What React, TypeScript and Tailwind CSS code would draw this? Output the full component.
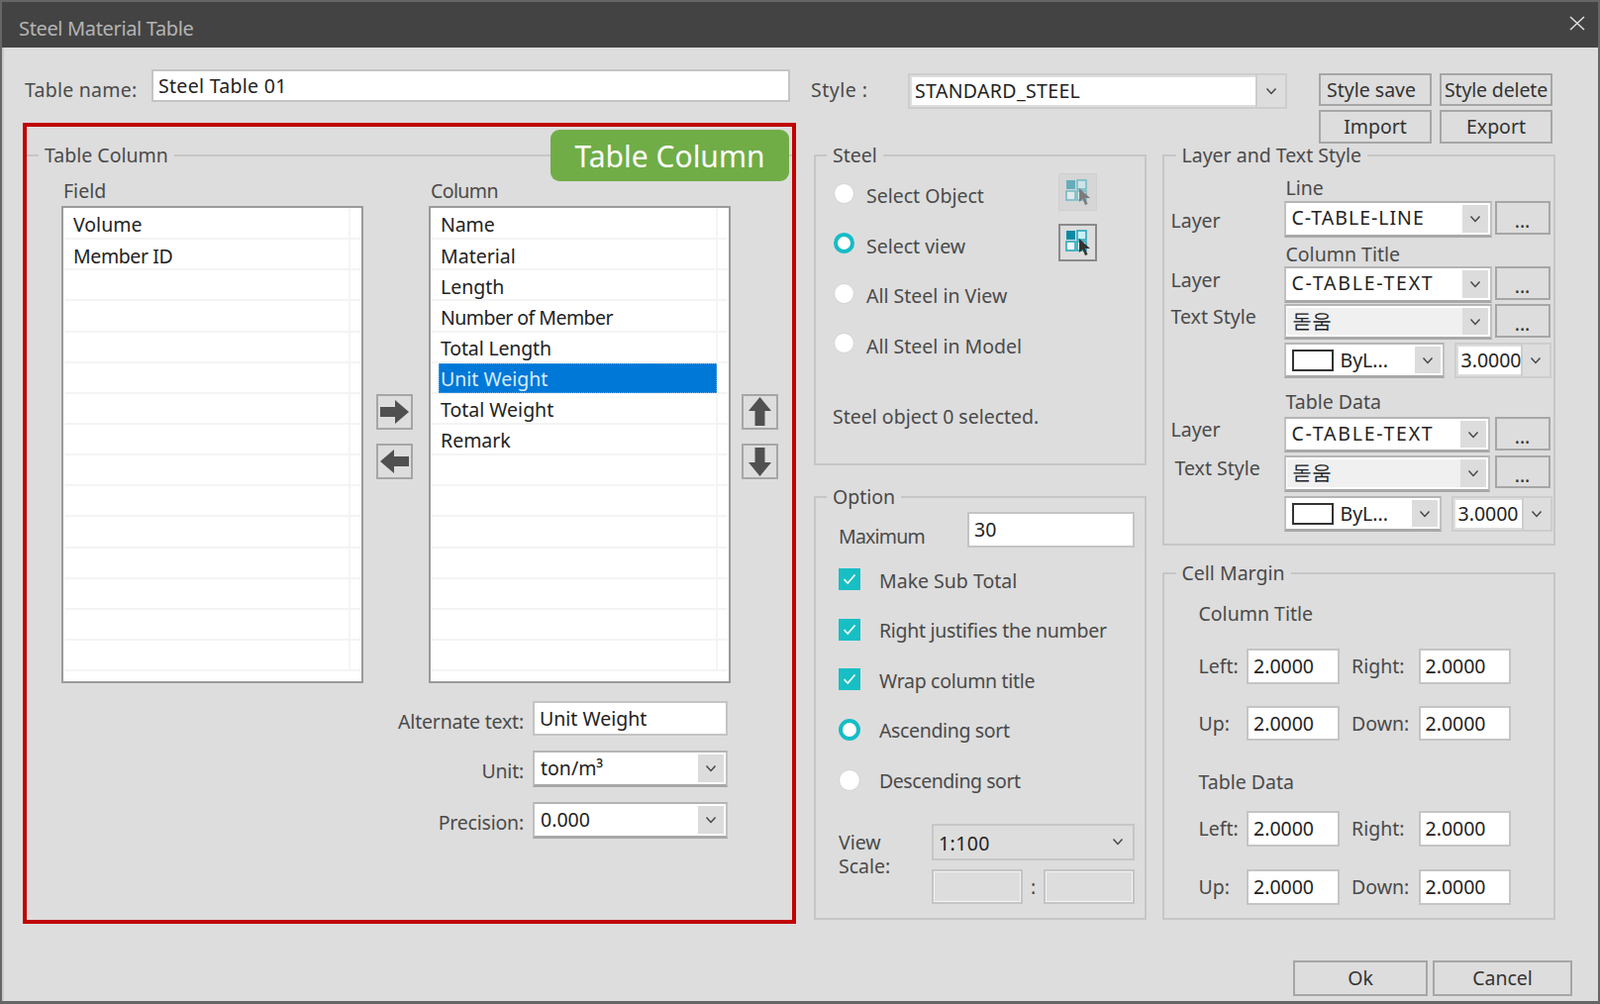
import type { ReactNode } from "react";

const fieldRows = ["Volume", "Member ID"];
const columnRows = ["Name", "Material", "Length", "Number of Member", "Total Length", "Unit Weight", "Total Weight", "Remark"];

const rowTracking: Record<string, string> = {
  "Number of Member": "tracking-[-0.55px]",
  "Member ID": "tracking-[-0.4px]",
  "Total Length": "tracking-[-0.15px]",
  Name: "tracking-[-0.1px]",
};

function Chevron({ className = "" }: { className?: string }) {
  return (
    <svg width="12" height="8" viewBox="0 0 12 8" className={className}>
      <path d="M1.5 1.5 L6 6.5 L10.5 1.5" fill="none" stroke="#444" strokeWidth="1.4" />
    </svg>
  );
}

function Group({ title, className = "", legendClass = "ml-[12px]", children }: { title: string; className?: string; legendClass?: string; children: ReactNode }) {
  return (
    <fieldset className={`border-2 border-[#c6c6c6] ${className}`}>
      <legend className={`${legendClass} px-[6px] h-[26px] leading-[26px] text-[#4a4a4a]`}>{title}</legend>
      {children}
    </fieldset>
  );
}

function TextBox({ value, className = "", muted = false }: { value?: string; className?: string; muted?: boolean }) {
  return (
    <div
      className={`border-2 border-[#c4c4c4] px-[5px] flex items-center leading-none ${muted ? "bg-[#dddddd] outline outline-1 -outline-offset-3 outline-[#f4f4f4]" : "bg-white"} text-[#222] ${className}`}
    >
      {value}
    </div>
  );
}

// raised combo with a grey arrow cell on the right
function Combo({ children, className = "", inner = "bg-white" }: { children: ReactNode; className?: string; inner?: string }) {
  return (
    <div className={`flex border-2 border-[#c0c0c0] border-b-[3px] border-b-[#a8a8a8] border-t-[#b4b4b4] bg-white text-[#222] ${className}`}>
      <div className={`flex-1 min-w-0 flex items-center pl-[5px] my-[2px] ml-[1px] leading-none ${inner}`}>{children}</div>
      <div className="w-[26px] my-[2px] mr-[2px] bg-[#dcdcdc] flex items-center justify-center">
        <Chevron />
      </div>
    </div>
  );
}

// flat combo: grey frame, white edit part, bare arrow
function FlatCombo({ value, className = "", textClass = "", arrow = 30 }: { value: string; className?: string; textClass?: string; arrow?: number }) {
  return (
    <div className={`flex border-2 border-[#cdcdcd] bg-[#dddddd] text-[#222] ${className}`}>
      <div className={`flex-1 min-w-0 bg-white my-[2px] ml-[2px] flex items-center pl-[3px] leading-none ${textClass}`}>{value}</div>
      <div className="border-l-2 border-[#cdcdcd] flex items-center justify-center" style={{ width: arrow }}>
        <Chevron />
      </div>
    </div>
  );
}

function Btn({ children, className = "" }: { children: ReactNode; className?: string }) {
  return (
    <div className={`border-2 border-[#a6a6a6] flex items-center justify-center leading-none text-[#333] ${className}`}>
      {children}
    </div>
  );
}

function Arrow({ d }: { d: string }) {
  return (
    <div className="w-[37px] h-[36px] border-2 border-[#a6a6a6] flex items-center justify-center">
      <svg width="33" height="32" viewBox="0 0 33 32">
        <path d={d} fill="#505050" />
      </svg>
    </div>
  );
}

function ListBox({ rows, selected, textLeft }: { rows: string[]; selected?: string; textLeft: string }) {
  const total = Array.from({ length: 15 }, (_, i) => rows[i] ?? "");
  return (
    <div className="h-[482px] border-2 border-[#9a9a9a] bg-white overflow-hidden px-[1px] pt-[1px]">
      {total.map((row, i) => (
        <div key={i} className="h-[31.15px] flex border-b-2 border-[#f4f4f4]">
          <div className="w-[289px] border-r-2 border-[#f4f4f4] flex items-center">
            {row === selected && row ? (
              <div className="ml-[7px] mt-[2px] w-[281px] shrink-0 h-[30px] bg-[#0078d7] text-[#d8ecff] flex items-center pl-[2px] pt-[1px] outline-1 outline-dotted -outline-offset-1 outline-[#5aa6e6]">
                {row}
              </div>
            ) : (
              <span className={`${textLeft} mt-[3px] text-[#222] ${rowTracking[row] ?? ""}`}>{row}</span>
            )}
          </div>
        </div>
      ))}
    </div>
  );
}

function GridIcon({ faded = false }: { faded?: boolean }) {
  return (
    <svg width="30" height="30" viewBox="0 0 30 30" className={faded ? "opacity-55" : ""}>
      <rect x="3" y="3" width="9" height="9" fill="#0d8aa3" />
      <rect x="14" y="3" width="9" height="9" fill="#c9f1f5" stroke="#2aa7bb" strokeWidth="1.6" />
      <rect x="3" y="14" width="9" height="9" fill="#eef8f9" stroke="#2aa7bb" strokeWidth="1.6" />
      <rect x="14" y="14" width="9" height="9" fill="#eef8f9" stroke="#2aa7bb" strokeWidth="1.6" />
      <path d="M16 11 L16 25 L19.5 22 L22 28 L24.5 27 L22 21 L27 21 Z" fill="#333" />
    </svg>
  );
}

function Radio({ on = false, size = "w-[21px] h-[21px]" }: { on?: boolean; size?: string }) {
  return (
    <div
      className={`${size} shrink-0 rounded-full bg-white ${on ? "border-[4px] border-[#16bcc6]" : "border border-[#d2d2d2]"}`}
    />
  );
}

function CheckBox() {
  return (
    <div className="w-[22px] h-[22px] shrink-0 bg-[#17bfc4] flex items-center justify-center">
      <svg width="14" height="12" viewBox="0 0 14 12">
        <path d="M1.5 6 L5.2 10 L12.5 1.5" fill="none" stroke="#fff" strokeWidth="1.7" />
      </svg>
    </div>
  );
}

function SteelRow({ on, label, icon }: { on?: boolean; label: string; icon?: ReactNode }) {
  return (
    <div className="h-[50.5px] pl-[18px] flex items-center">
      <Radio on={on} />
      <span className="ml-[12px] mt-[5px]">{label}</span>
      {icon && <div className="ml-auto mr-[48px] -mt-[2px]">{icon}</div>}
    </div>
  );
}

function OptionRow({ mark, label, tracking = "" }: { mark: ReactNode; label: string; tracking?: string }) {
  return (
    <div className="h-[50.6px] pl-[23px] flex items-center">
      {mark}
      <span className={`ml-[19px] mt-[2px] ${tracking}`}>{label}</span>
    </div>
  );
}

function LayerRow({ label, labelClass = "pl-[7px]", top, className = "", combo, dotsH, comboW, gap }: {
  label: string; labelClass?: string; top: string; className?: string; combo: ReactNode; dotsH: string; comboW?: string; gap: string;
}) {
  return (
    <div className={`flex ${className}`}>
      <div className={`w-[121px] shrink-0 ${labelClass} ${top} leading-[26px]`}>{label}</div>
      <div className={comboW}>{combo}</div>
      <Btn className={`w-[56px] ${dotsH} ${gap}`}><span className="mt-[6px]">...</span></Btn>
    </div>
  );
}

function ByLayer({ className = "" }: { className?: string }) {
  return (
    <Combo className={className}>
      <span className="w-[42px] h-[22px] border-2 border-[#333] bg-white shrink-0" />
      <span className="ml-[7px]">ByL...</span>
    </Combo>
  );
}

function LayerName({ children, tracking }: { children: string; tracking: string }) {
  return <span className={`-mt-[2px] ${tracking}`}>{children}</span>;
}

function MarginRow({ a, b, className = "" }: { a: string; b: string; className?: string }) {
  return (
    <div className={`flex items-center pl-[35px] h-[35.5px] ${className}`}>
      <span className="w-[48.5px]">{a}</span>
      <TextBox value="2.0000" className="w-[93.5px] h-full" />
      <span className="w-[67.5px] ml-[12.5px]">{b}</span>
      <TextBox value="2.0000" className="w-[93.5px] h-full" />
    </div>
  );
}

export default function App() {
  return (
    <div className="w-[1616px] h-[1014px] overflow-hidden border-x-2 border-t-2 border-b-[3px] border-[#666666] bg-[#dddddd] text-[19.5px] text-[#4a4a4a] font-['Noto_Sans','Noto_Sans_CJK_KR',sans-serif] flex flex-col">
      <div className="h-[46px] shrink-0 bg-[#434343] flex items-center justify-between pl-[17px] pr-[13px] text-[#b4b4b4]">
        <span className="mt-[8px] text-[20px] tracking-[-0.35px]">Steel Material Table</span>
        <svg width="16" height="15" viewBox="0 0 16 15" className="-mt-[4px]">
          <path d="M1 1 L15 14 M15 1 L1 14" stroke="#e0e0e0" strokeWidth="1.5" />
        </svg>
      </div>

      <div className="flex-1 flex pl-[19px] border-l-2 border-[#c9c9c9]">
        {/* left side */}
        <div className="w-[781px] shrink-0">
          <div className="flex mt-[22px] h-[33px]">
            <div className="w-[130px] pl-[2px] pt-[7px] leading-[28px] tracking-[0.25px]">Table name:</div>
            <div className="w-[645px] border-2 border-[#c4c4c4] bg-white text-[#222] flex items-center pl-[5px] leading-none tracking-[0.3px]">Steel Table 01</div>
          </div>

          <div className="relative mt-[21px] h-[809px] border-4 border-[#c00000] pt-[16px]">
            <div className="absolute left-[529px] top-[3px] w-[241px] h-[52px] rounded-[9px] bg-[#70ad47] text-white text-[30px] flex items-center justify-center">
              Table Column
            </div>
            <Group title="Table Column" className="border-x-0 border-b-0">
              <div className="flex mt-[10px] pl-[35px]">
                <div className="w-[305px]">
                  <div className="h-[28px] leading-[26px] pl-[2px]">Field</div>
                  <ListBox rows={fieldRows} textLeft="ml-[9px]" />
                </div>
                <div className="w-[66px] pl-[13px] pt-[218px] flex flex-col gap-[14px]">
                  <Arrow d="M2 11 H17 V4 L31 16 L17 28 V21 H2 Z" />
                  <Arrow d="M31 11 H16 V4 L2 16 L16 28 V21 H31 Z" />
                </div>
                <div className="w-[305px]">
                  <div className="h-[28px] leading-[26px] pl-[2px] tracking-[-0.6px]">Column</div>
                  <ListBox rows={columnRows} selected="Unit Weight" textLeft="ml-[9px]" />
                </div>
                <div className="w-[48px] pl-[11px] pt-[218px] flex flex-col gap-[14px]">
                  <Arrow d="M11.5 30 V15 H5 L16.5 1 L28 15 H21.5 V30 Z" />
                  <Arrow d="M11.5 2 V17 H5 L16.5 31 L28 17 H21.5 V2 Z" />
                </div>
              </div>
              <div className="mt-[18px]">
                <div className="flex h-[35px]">
                  <div className="w-[502px] text-right pt-[7px] leading-[28px] tracking-[-0.2px]">Alternate text:</div>
                  <TextBox value="Unit Weight" className="ml-[9px] w-[197px] h-full" />
                </div>
                <div className="flex h-[37px] mt-[15px]">
                  <div className="w-[502px] text-right pt-[7px] leading-[28px] tracking-[-0.2px]">Unit:</div>
                  <Combo className="ml-[9px] w-[197px] h-full">ton/m³</Combo>
                </div>
                <div className="flex h-[37px] mt-[15px]">
                  <div className="w-[502px] text-right pt-[7px] leading-[28px] tracking-[-0.2px]">Precision:</div>
                  <Combo className="ml-[9px] w-[197px] h-full">0.000</Combo>
                </div>
              </div>
            </Group>
          </div>
        </div>

        {/* right side */}
        <div className="w-[769px] ml-[15px] shrink-0 flex flex-col">
          <div className="h-[96px] flex pt-[26px]">
            <div className="w-[98px] pt-[3px] leading-[28px] tracking-[0.5px]">Style :</div>
            <FlatCombo value="STANDARD_STEEL" textClass="tracking-[0.35px]" className="w-[383px] h-[36px]" />
            <div className="ml-[32px] grid grid-cols-[114px_114px] gap-x-[8px] gap-y-[4px] h-[71px] grid-rows-[33px_34px]">
              <Btn className="pr-[8px]">Style save</Btn>
              <Btn><span className="tracking-[-0.15px]">Style delete</span></Btn>
              <Btn>Import</Btn>
              <Btn>Export</Btn>
            </div>
          </div>

          <div className="flex ml-[3px] gap-[15.5px]">
            <div className="w-[336px]">
              <Group title="Steel" legendClass="ml-[11px]" className="h-[326px]">
                <SteelRow label="Select Object" icon={
                  <div className="w-[39px] h-[38px] bg-[#d6d6d6] border border-[#d0d0d0] flex items-center justify-center"><GridIcon faded /></div>
                } />
                <SteelRow on label="Select view" icon={
                  <div className="w-[39px] h-[38px] border-2 border-[#8a8a8a] flex items-center justify-center"><GridIcon /></div>
                } />
                <SteelRow label="All Steel in View" />
                <SteelRow label="All Steel in Model" />
                <div className="mt-[36px] pl-[17px] leading-[26px]">Steel object 0 selected.</div>
              </Group>

              <Group title="Option" legendClass="ml-[11px]" className="h-[440px] mt-[19px]">
                <div className="flex h-[36px] mt-[2px] pl-[23px]">
                  <div className="w-[130px] pt-[11px] leading-[28px] tracking-[-0.8px]">Maximum</div>
                  <TextBox value="30" className="w-[169px] h-full" />
                </div>
                <div className="mt-[7px]">
                  <OptionRow mark={<CheckBox />} label="Make Sub Total" />
                  <OptionRow mark={<CheckBox />} label="Right justifies the number" tracking="tracking-[-0.3px]" />
                  <OptionRow mark={<CheckBox />} label="Wrap column title" tracking="tracking-[-0.3px]" />
                  <OptionRow mark={<Radio on size="w-[22px] h-[22px]" />} label="Ascending sort" tracking="tracking-[-0.35px]" />
                  <OptionRow mark={<Radio size="w-[22px] h-[22px]" />} label="Descending sort" tracking="tracking-[-0.45px]" />
                </div>
                <div className="flex mt-[19px] pl-[23px]">
                  <div className="w-[94px] pt-[7px] leading-[24.5px]">View<br />Scale:</div>
                  <div className="w-[205px]">
                    <div className="h-[37px] border-2 border-[#c6c6c6] flex items-center justify-between pl-[5px] pr-[9px] text-[#222] leading-none">
                      <span className="mt-[3px] tracking-[0.4px]">1:100</span>
                      <Chevron />
                    </div>
                    <div className="flex items-center mt-[9px] h-[35px]">
                      <TextBox muted className="w-[92px] h-full" />
                      <span className="w-[21px] text-center">:</span>
                      <TextBox muted className="w-[92px] h-full" />
                    </div>
                  </div>
                </div>
              </Group>
            </div>

            <div className="w-[397px]">
              <Group title="Layer and Text Style" className="h-[407px]">
                <div className="mt-[7px] ml-[123px] h-[26px] leading-[26px]">Line</div>
                <LayerRow label="Layer" top="pt-[7px]" comboW="w-[210px]" gap="ml-[3px]" dotsH="h-[34px]"
                  combo={<Combo className="h-[37px]"><LayerName tracking="tracking-[1px]">C-TABLE-LINE</LayerName></Combo>} />
                <div className="mt-[5px] ml-[123px] h-[24px] leading-[24px]">Column Title</div>
                <LayerRow label="Layer" top="pt-[1px]" comboW="w-[210px]" gap="ml-[3px]" dotsH="h-[34px]"
                  combo={<Combo className="h-[37px]"><LayerName tracking="tracking-[1.75px]">C-TABLE-TEXT</LayerName></Combo>} />
                <LayerRow label="Text Style" top="pt-[0px]" className="mt-[1px]" comboW="w-[210px]" gap="ml-[3px]" dotsH="h-[34px]"
                  combo={<Combo className="h-[36px]" inner="bg-[#f0f0f0]"><span className="-mt-[2px] font-['Noto_Sans_CJK_KR',sans-serif]">돋움</span></Combo>} />
                <div className="flex mt-[3px] ml-[121px]">
                  <ByLayer className="w-[162px] h-[36px]" />
                  <FlatCombo value="3.0000" arrow={29} className="ml-[10px] w-[98px] h-[36px]" />
                </div>
                <div className="mt-[12px] ml-[123px] h-[24px] leading-[24px]">Table Data</div>
                <LayerRow label="Layer" top="pt-[0px]" className="mt-[3px]" comboW="w-[208px]" gap="ml-[5px]" dotsH="h-[34px]"
                  combo={<Combo className="h-[36px]"><LayerName tracking="tracking-[1.75px]">C-TABLE-TEXT</LayerName></Combo>} />
                <LayerRow label="Text Style" labelClass="pl-[11px]" top="pt-[0px]" className="mt-[3px]" comboW="w-[208px]" gap="ml-[5px]" dotsH="h-[33px]"
                  combo={<Combo className="h-[37px]" inner="bg-[#f0f0f0]"><span className="-mt-[2px] font-['Noto_Sans_CJK_KR',sans-serif]">돋움</span></Combo>} />
                <div className="flex mt-[4px] ml-[121px]">
                  <ByLayer className="w-[159px] h-[36px]" />
                  <FlatCombo value="3.0000" arrow={29} className="ml-[10px] w-[102px] h-[36px]" />
                </div>
              </Group>

              <Group title="Cell Margin" className="h-[363px] mt-[15px]">
                <div className="mt-[16px] pl-[35px] h-[24px] leading-[24px]">Column Title</div>
                <MarginRow a="Left:" b="Right:" className="mt-[23px]" />
                <MarginRow a="Up:" b="Down:" className="mt-[22px]" />
                <div className="mt-[30px] pl-[35px] h-[24px] leading-[24px]">Table Data</div>
                <MarginRow a="Left:" b="Right:" className="mt-[17px]" />
                <MarginRow a="Up:" b="Down:" className="mt-[23.5px]" />
              </Group>
            </div>
          </div>

          <div className="flex justify-end gap-[5px] mt-[41px]">
            <Btn className="w-[136px] h-[36px]">Ok</Btn>
            <Btn className="w-[141px] h-[36px]">Cancel</Btn>
          </div>
        </div>
      </div>
    </div>
  );
}
